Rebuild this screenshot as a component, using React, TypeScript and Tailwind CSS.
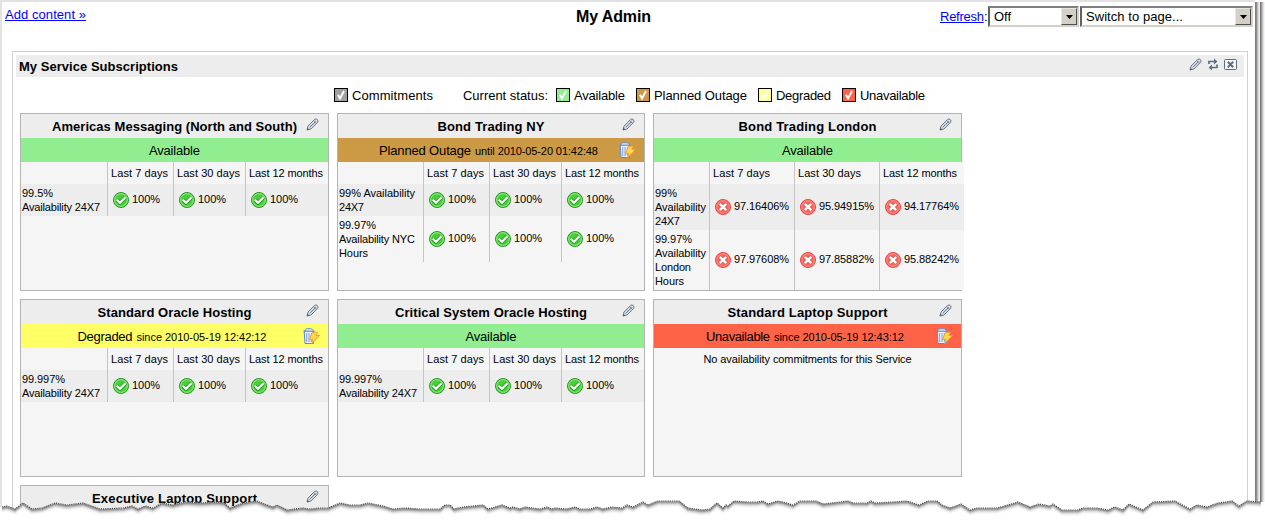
import React, { useLayoutEffect, useRef } from "react";

/* Single line of text whose tracking is fitted to a given width. */
function T({ w, className = "text-[11px] leading-[15px]", children }: {
  w: number; className?: string; children: string;
}) {
  const ref = useRef<HTMLSpanElement>(null);
  useLayoutEffect(() => {
    const el = ref.current;
    if (!el) return;
    el.style.letterSpacing = "0px";
    const natural = el.getBoundingClientRect().width;
    el.style.letterSpacing = `${(w - natural) / Math.max(1, children.length - 1)}px`;
  }, [w, children]);
  return (
    <div className={`shrink-0 whitespace-nowrap ${className}`} style={{ width: w }}>
      <span ref={ref}>{children}</span>
    </div>
  );
}

const MD = "text-[13px] leading-[17px]";
const MD_BOLD = "text-[13px] leading-[17px] font-bold";
const LINK = "text-[13px] leading-[17px] text-[#0000ff] underline";

function Pencil() {
  return (
    <svg width="13" height="13" viewBox="0 0 13 13" className="block">
      <path d="M1 12 L2 8 L8.6 1.4 Q9.9 .3 11.4 1.6 Q12.7 3.1 11.6 4.4 L5 11 Z" fill="#d5dce4" stroke="#6d7b8a" strokeWidth="1" />
      <path d="M3.8 9.3 L9.6 3.5 M7.6 2.4 L10.6 5.4" stroke="#6d7b8a" strokeWidth="1" fill="none" />
      <path d="M.8 12.2 L1.5 9.7 L3.3 11.5 Z" fill="#526070" />
    </svg>
  );
}

function Good() {
  return (
    <svg width="16" height="16" viewBox="0 0 16 16" className="block shrink-0">
      <circle cx="8" cy="8" r="7.5" fill="#48cf38" stroke="#27982a" strokeWidth="1" />
      <circle cx="8" cy="8" r="6.3" fill="none" stroke="#9bea85" strokeWidth="1" />
      <path d="M3.8 7.8 L7 10.8 L12.4 5.2" fill="none" stroke="#1f9a20" strokeWidth="3.8" />
      <path d="M3.8 7.8 L7 10.8 L12.4 5.2" fill="none" stroke="#fff" strokeWidth="2.2" />
    </svg>
  );
}

function Bad() {
  return (
    <svg width="16" height="16" viewBox="0 0 16 16" className="block shrink-0">
      <circle cx="8" cy="8" r="7.5" fill="#f86a5c" stroke="#ee3a50" strokeWidth="1" />
      <circle cx="8" cy="8" r="6.3" fill="none" stroke="#fb8f80" strokeWidth="1" />
      <path d="M4.8 4.8 L11.2 11.2 M11.2 4.8 L4.8 11.2" stroke="#d84a48" strokeWidth="4" />
      <path d="M4.8 4.8 L11.2 11.2 M11.2 4.8 L4.8 11.2" stroke="#fff" strokeWidth="2.6" />
    </svg>
  );
}

function Outage() {
  return (
    <svg width="17" height="17" viewBox="0 0 17 17" className="block">
      <path d="M3.5 .8 H8.5 L10.5 2.8 V15.5 H2 L1.2 3 Z" fill="#edf3ff" stroke="#5b88cc" />
      <path d="M.5 3.2 H11.5" stroke="#5b88cc" strokeWidth="1.2" />
      <path d="M3.7 5 V14 M6 5 V14 M8.3 5 V14" stroke="#7d9fd8" strokeWidth="1" />
      <path d="M9.6 4.2 H14.4 L13 7.4 H16.6 L8.6 15.8 L10 11.4 H6.4 Z" fill="#ffd84a" stroke="#f5962f" strokeWidth=".9" />
    </svg>
  );
}

function Box({ color }: { color: string }) {
  return (
    <svg width="14" height="14" viewBox="0 0 14 14" className="block shrink-0">
      <rect x=".5" y=".5" width="13" height="13" fill={color} stroke="#000" />
      <path d="M4 6.8 L6 10.5 L10 3" fill="none" stroke="#fff" strokeWidth="1.9" />
    </svg>
  );
}

type Line = [string, number];
type Row = { label: Line[]; h: string; values: string[] };
type Service = {
  title: string; tw: number; status?: string; sw?: number; color?: string;
  note?: string; nw?: number; cols?: string; rows: Row[]; bad?: boolean;
};

const HUNDRED = ["100%", "100%", "100%"];
const GREEN = "bg-[#90ee90]";
const COLS = "grid-cols-[86px_66px_72px_83px]";
const COLS_MID = "grid-cols-[85px_66px_72px_83px]";
const COLS_WIDE = "grid-cols-[55px_85px_85px_85px]";

const SERVICES: Service[] = [
  { title: "Americas Messaging (North and South)", tw: 245, status: "Available", sw: 51, color: GREEN, cols: COLS,
    rows: [{ label: [["99.5%", 31], ["Availability 24X7", 78]], h: "h-8", values: HUNDRED }] },
  { title: "Bond Trading NY", tw: 107, status: "Planned Outage", sw: 92, color: "bg-[#cc9944]", note: "until 2010-05-20 01:42:48", nw: 123, cols: COLS_MID,
    rows: [
      { label: [["99% Availability", 76], ["24X7", 25]], h: "h-8", values: HUNDRED },
      { label: [["99.97%", 37], ["Availability NYC", 76], ["Hours", 29]], h: "h-[46px]", values: HUNDRED },
    ] },
  { title: "Bond Trading London", tw: 138, status: "Available", sw: 51, color: GREEN, cols: COLS_WIDE, bad: true,
    rows: [
      { label: [["99%", 22], ["Availability", 51], ["24X7", 25]], h: "h-[46px]", values: ["97.16406%", "95.94915%", "94.17764%"] },
      { label: [["99.97%", 37], ["Availability", 51], ["London", 36], ["Hours", 29]], h: "h-[60px]", values: ["97.97608%", "97.85882%", "95.88242%"] },
    ] },
  { title: "Standard Oracle Hosting", tw: 154, status: "Degraded", sw: 55, color: "bg-[#ffff66]", note: "since 2010-05-19 12:42:12", nw: 130, cols: COLS,
    rows: [{ label: [["99.997%", 43], ["Availability 24X7", 78]], h: "h-8", values: HUNDRED }] },
  { title: "Critical System Oracle Hosting", tw: 192, status: "Available", sw: 51, color: GREEN, cols: COLS_MID,
    rows: [{ label: [["99.997%", 43], ["Availability 24X7", 78]], h: "h-8", values: HUNDRED }] },
  { title: "Standard Laptop Support", tw: 160, status: "Unavailable", sw: 64, color: "bg-[#ff6347]", note: "since 2010-05-19 12:43:12", nw: 130, rows: [] },
  { title: "Executive Laptop Support", tw: 165, rows: [] },
];

const HEADS: Line[] = [["Last 7 days", 57], ["Last 30 days", 63], ["Last 12 months", 74]];

function Table({ s }: { s: Service }) {
  return (
    <>
      <div className={`grid h-[22px] w-max bg-[#f5f5f5] ${s.cols}`}>
        <span />
        {HEADS.map(([t, w]) => (
          <div key={t} className="border-l border-[#c4c4c4] pt-[4px] pl-[3px]"><T w={w}>{t}</T></div>
        ))}
      </div>
      {s.rows.map((r, i) => (
        <div key={i} className={`grid w-max ${r.h} ${s.cols} ${i % 2 ? "bg-[#f5f5f5]" : "bg-[#ededed]"}`}>
          <div className="flex flex-col pt-[2px] pl-[1px]">
            {r.label.map(([t, w]) => <div key={t} className="h-[14px]"><T w={w}>{t}</T></div>)}
          </div>
          {r.values.map((v, k) => (
            <div key={k} className="flex items-center gap-[3px] border-l border-[#c4c4c4] pl-[5px]">
              {s.bad ? <Bad /> : <Good />}
              <div className="pb-[1px]"><T w={s.bad ? 55 : 28}>{v}</T></div>
            </div>
          ))}
        </div>
      ))}
    </>
  );
}

function Card({ s }: { s: Service }) {
  return (
    <section className={`border border-[#b4b4b4] bg-[#f5f5f5] ${s.status ? "h-[178px]" : "h-[26px]"}`}>
      <header className="relative flex h-6 justify-center bg-[#ededed] pt-[4px]">
        <T w={s.tw} className={MD_BOLD}>{s.title}</T>
        <span className="absolute top-[4px] right-[9px]"><Pencil /></span>
      </header>
      {s.status && (
        <div className={`relative flex h-6 justify-center pt-[4px] ${s.color}`}>
          <T w={s.sw!} className={MD}>{s.status}</T>
          {s.note && <div className="mr-[5px] ml-1 pt-[2px]"><T w={s.nw!}>{s.note}</T></div>}
          {s.note && <span className="absolute top-[4px] right-[8px]"><Outage /></span>}
        </div>
      )}
      {s.rows.length > 0 && <Table s={s} />}
      {s.status && s.rows.length === 0 && (
        <div className="flex justify-center pt-[4px]"><T w={208}>No availability commitments for this Service</T></div>
      )}
    </section>
  );
}

function Select({ label, w, className }: { label: string; w: number; className: string }) {
  return (
    <div className={`flex h-[21px] justify-between border-2 border-t-[#808080] border-r-[#d4d0c8] border-b-[#d4d0c8] border-l-[#606060] bg-white ${className}`}>
      <div className="pl-[4px]"><T w={w} className={MD}>{label}</T></div>
      <div className="flex h-[17px] w-4 items-center justify-center border border-t-[#e8e6e0] border-r-[#505050] border-b-[#505050] border-l-[#e8e6e0] bg-[#d4d0c8]">
        <svg width="7" height="4"><path d="M0 0H7L3.5 4Z" /></svg>
      </div>
    </div>
  );
}

const LEGEND: [string, number, string][] = [
  ["Available", 51, "#90ee90"],
  ["Planned Outage", 93, "#cc9944"],
  ["Degraded", 55, "#ffff99"],
  ["Unavailable", 65, "#ff6347"],
];

const EDGE = "2,507 7,506 15,509 23,503 32,509 42,508 55,503 67,505 83,503 100,509 123,508 132,506 138,509 145,506 153,508 162,503 173,505 185,502 200,503 217,502 224,503 230,508 243,503 257,501 267,505 273,507 277,505 287,510 302,508 310,509 320,508 328,508 340,503 350,505 360,505 368,503 383,506 393,509 405,508 420,509 440,509 445,505 450,505 454,509 463,507 483,505 488,509 502,505 510,508 513,507 520,509 525,507 540,509 547,507 552,509 555,508 567,509 575,507 580,509 590,509 597,507 603,509 612,507 622,508 627,505 633,507 643,502 648,505 658,501 679,501 688,508 702,510 710,509 717,503 723,508 726,505 728,506 734,501 748,502 757,502 763,501 768,504 777,501 783,502 793,505 800,501 816,501 823,504 840,502 848,501 853,503 867,503 871,501 875,503 893,502 907,501 919,505 928,501 937,501 942,505 950,508 961,504 970,510 977,508 997,508 1008,505 1018,502 1030,507 1039,504 1050,506 1053,504 1062,510 1078,510 1083,508 1097,508 1108,510 1115,507 1123,510 1129,504 1143,510 1153,502 1175,501 1190,509 1197,505 1207,507 1218,503 1232,501 1239,506 1247,501 1261,502";
const FADE: [number, string][] = [[5, "#f8f8f8"], [4, "#ececec"], [3, "#d8d8d8"], [2, "#b8b8b8"], [1, "#949494"]];

function TornEdge() {
  return (
    <svg width="1265" height="31" viewBox="0 490 1265 31" className="absolute bottom-0 left-0">
      <polygon points={`0,521 0,507 ${EDGE} 1265,502 1265,521`} fill="#fff" />
      {FADE.map(([d, c]) => (
        <polyline key={d} points={EDGE} transform={`translate(0 ${d})`} fill="none" stroke={c} strokeWidth="1.4" />
      ))}
      <polyline points={EDGE} fill="none" stroke="#4c4c4c" strokeWidth="1.2" strokeDasharray="1.2 1" />
    </svg>
  );
}

function SideShadow() {
  return (
    <div className="mt-[2px] flex h-full shrink-0">
      <i className="w-px bg-[#808080]" />
      <i className="w-px bg-[#8e8e8e]" />
      <i className="w-px bg-[#bcbcbc]" />
      <i className="w-px bg-[#dcdcdc]" />
      <i className="w-px bg-[#f0f0f0]" />
      <i className="w-px bg-[#777777]" />
      <i className="w-px bg-[#9a9a9a]" />
      <i className="w-px bg-[#c4c4c4]" />
      <i className="w-px bg-[#e2e2e2]" />
      <i className="w-px bg-[#f6f6f6]" />
    </div>
  );
}

export default function App() {
  return (
    <div className="relative h-[521px] w-[1265px] overflow-hidden bg-white font-['Liberation_Sans',Arial,sans-serif] text-black">
      <div className="flex h-full">
        <div className="w-[2px] shrink-0 bg-[#e2e2e2]" />
        <main className="w-[1253px] shrink-0 border-t-2 border-[#e2e2e2]">
          <div className="flex h-[49px] justify-between pl-[3px]">
            <div className="w-[571px] pt-[4px]"><T w={81} className={LINK}>Add content »</T></div>
            <div className="pt-[5px]"><T w={75} className="text-[16px] leading-[20px] font-bold">My Admin</T></div>
            <div className="ml-auto flex pt-[4px] pr-[2px]">
              <div className="flex pt-[2px]"><T w={44} className={LINK}>Refresh</T><T w={4} className={MD}>:</T></div>
              <Select label="Off" w={17} className="w-[91px]" />
              <Select label="Switch to page..." w={97} className="ml-[1px] w-[173px]" />
            </div>
          </div>
          <div className="ml-[10px] h-[480px] w-[1236px] border border-[#d0d0d0] p-[3px]">
            <header className="flex h-[22px] justify-between bg-[#ededed] pt-[3px] pr-[7px] pl-[3px]">
              <T w={159} className={MD_BOLD}>My Service Subscriptions</T>
              <div className="flex gap-[6px]">
                <Pencil />
                <svg width="10" height="13" viewBox="0 0 10 13" className="block">
                  <path d="M1 6 V3.5 H6.5 M9 6.5 V9.5 H3.5" fill="none" stroke="#5b6f80" strokeWidth="1.7" />
                  <path d="M6 .6 L9.4 3.5 L6 6.4Z M4 6.6 L.6 9.5 L4 12.4Z" fill="#5b6f80" />
                </svg>
                <svg width="13" height="13" viewBox="0 0 13 13" className="block">
                  <rect x=".5" y="1.5" width="12" height="10" rx="1" fill="#f5f7f9" stroke="#5b6f80" />
                  <path d="M3.8 3.8 L9.2 9.2 M9.2 3.8 L3.8 9.2" stroke="#5b6f80" strokeWidth="2" />
                </svg>
              </div>
            </header>
            <div className="flex h-9 items-start pt-[10px] pl-[318px]">
              <div className="pt-px"><Box color="#a0a0a0" /></div>
              <div className="ml-1"><T w={81} className={MD}>Commitments</T></div>
              <div className="ml-[30px]"><T w={85} className={MD}>Current status:</T></div>
              <div className="ml-2 flex gap-[11px]">
                {LEGEND.map(([t, w, c]) => (
                  <div key={t} className="flex gap-1"><div className="pt-px"><Box color={c} /></div><T w={w} className={MD}>{t}</T></div>
                ))}
              </div>
            </div>
            <div className="grid grid-cols-[309px_308px_309px] gap-2 pl-[4px]">
              {SERVICES.map((s) => <Card key={s.title} s={s} />)}
            </div>
          </div>
        </main>
        <SideShadow />
      </div>
      <TornEdge />
    </div>
  );
}
